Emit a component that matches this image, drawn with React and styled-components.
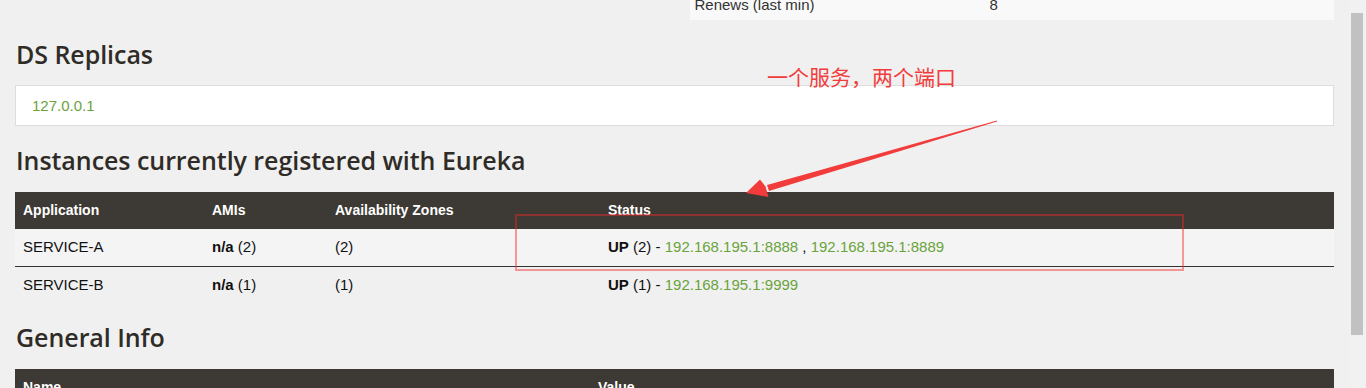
import React from "react";
import styled, { createGlobalStyle } from "styled-components";

const Global = createGlobalStyle`
  html, body { margin: 0; padding: 0; background: #f0f0f0; }
  body { font-family: "Liberation Sans", Arial, sans-serif; color: #333; }
`;

const Shell = styled.div`
  display: flex;
  width: 1366px;
  height: 388px;
  overflow: hidden;
  background: #f0f0f0;
`;

const Main = styled.div`
  position: relative;
  flex: 1;
  padding: 0 15px;
  overflow: hidden;
`;

const ScrollTrack = styled.div`
  width: 17px;
  flex: none;
  background: #f1f1f1;
  padding-top: 13px;
  box-sizing: border-box;
`;

const ScrollThumb = styled.div`
  width: 12px;
  height: 322px;
  margin-left: 2px;
  background: #c1c1c1;
`;

const TwoCol = styled.div`
  display: grid;
  grid-template-columns: 1fr 1fr;
  column-gap: 30px;
`;

const StatRow = styled.div`
  grid-column: 2;
  display: grid;
  grid-template-columns: 295px 1fr;
  height: 20px;
  background: #f9f9f9;
  font-size: 15px;
  line-height: 9px;
  color: #333;
`;

const StatCell = styled.div`
  padding: 0 5px;
`;

const Heading = styled.h1`
  font-family: "Open Sans", sans-serif;
  font-weight: 600;
  font-size: 25px;
  line-height: 30px;
  letter-spacing: -0.05px;
  color: #2f2b27;
  margin: ${(p) => p.$top || 19}px 0 ${(p) => p.$bottom || 16}px 1px;
`;

const ReplicaBox = styled.div`
  background: #fff;
  border: 1px solid #ddd;
  height: 39px;
  display: flex;
  align-items: center;
  padding: 0 16px;
  font-size: 15px;
`;

const Link = styled.span`
  color: #6aa33b;
`;

const Table = styled.div`
  display: grid;
  grid-template-columns: ${(p) => p.$cols};
  font-size: 15px;
`;

const HeadCell = styled.div`
  background: #3d3934;
  color: #fff;
  font-weight: 700;
  font-size: 14px;
  height: 37px;
  box-sizing: border-box;
  padding: 0 8px 2px;
  display: flex;
  align-items: center;
`;

const Cell = styled.div`
  height: ${(p) => (p.$divider ? 38 : 37)}px;
  display: flex;
  align-items: center;
  padding: 0 8px 3px;
  box-sizing: border-box;
  white-space: pre;
  color: #111;
  background: ${(p) => (p.$striped ? "#f4f4f4" : "transparent")};
  border-bottom: ${(p) => (p.$divider ? "1px solid #333" : "none")};
`;

const Strong = styled.span`
  font-weight: 700;
  color: #111;
`;

const Note = styled.div`
  position: absolute;
  left: 767px;
  top: 66px;
  font-family: "Noto Sans CJK SC", sans-serif;
  font-size: 21px;
  line-height: 21px;
  color: #f23c3c;
  white-space: nowrap;
`;

const Overlay = styled.svg`
  position: absolute;
  left: 0;
  top: 0;
  pointer-events: none;
`;

const Highlight = styled.div`
  position: absolute;
  left: 515px;
  top: 214px;
  width: 665px;
  height: 53px;
  border: 2px solid rgba(240, 40, 40, 0.45);
`;

const instanceCols = "189px 123px 273px 1fr";

const rows = [
  { app: "SERVICE-A", n: 2, urls: ["192.168.195.1:8888", "192.168.195.1:8889"] },
  { app: "SERVICE-B", n: 1, urls: ["192.168.195.1:9999"] },
];

export default function App() {
  return (
    <>
      <Global />
      <Shell>
        <Main>
          <TwoCol>
            <StatRow>
              <StatCell>Renews (last min)</StatCell>
              <StatCell>8</StatCell>
            </StatRow>
          </TwoCol>

          <Heading>DS Replicas</Heading>
          <ReplicaBox>
            <Link>127.0.0.1</Link>
          </ReplicaBox>

          <Heading $top={19} $bottom={17}>Instances currently registered with Eureka</Heading>
          <Table $cols={instanceCols}>
            <HeadCell>Application</HeadCell>
            <HeadCell>AMIs</HeadCell>
            <HeadCell>Availability Zones</HeadCell>
            <HeadCell>Status</HeadCell>
            {rows.map((r, i) => {
              const striped = i === 0;
              const divider = i === 0;
              return (
                <React.Fragment key={r.app}>
                  <Cell $striped={striped} $divider={divider}>{r.app}</Cell>
                  <Cell $striped={striped} $divider={divider}>
                    <Strong>n/a</Strong> ({r.n})
                  </Cell>
                  <Cell $striped={striped} $divider={divider}>({r.n})</Cell>
                  <Cell $striped={striped} $divider={divider}>
                    <Strong>UP</Strong> ({r.n}) -{" "}
                    {r.urls.map((u, k) => (
                      <React.Fragment key={u}>
                        {k > 0 ? " , " : ""}
                        <Link>{u}</Link>
                      </React.Fragment>
                    ))}
                  </Cell>
                </React.Fragment>
              );
            })}
          </Table>

          <Heading $top={18} $bottom={17}>General Info</Heading>
          <Table $cols="575px 1fr">
            <HeadCell>Name</HeadCell>
            <HeadCell>Value</HeadCell>
          </Table>

          <Note>一个服务，两个端口</Note>
          <Highlight />
          <Overlay width="1349" height="388" viewBox="0 0 1349 388">
            <polygon
              points="997,120.6 997,121.4 769,191 767,185"
              fill="#f23c3c"
            />
            <polygon
              points="746,193 760,179.5 765.5,186.5 768.5,197"
              fill="#f23c3c"
            />
          </Overlay>
        </Main>
        <ScrollTrack>
          <ScrollThumb />
        </ScrollTrack>
      </Shell>
    </>
  );
}
